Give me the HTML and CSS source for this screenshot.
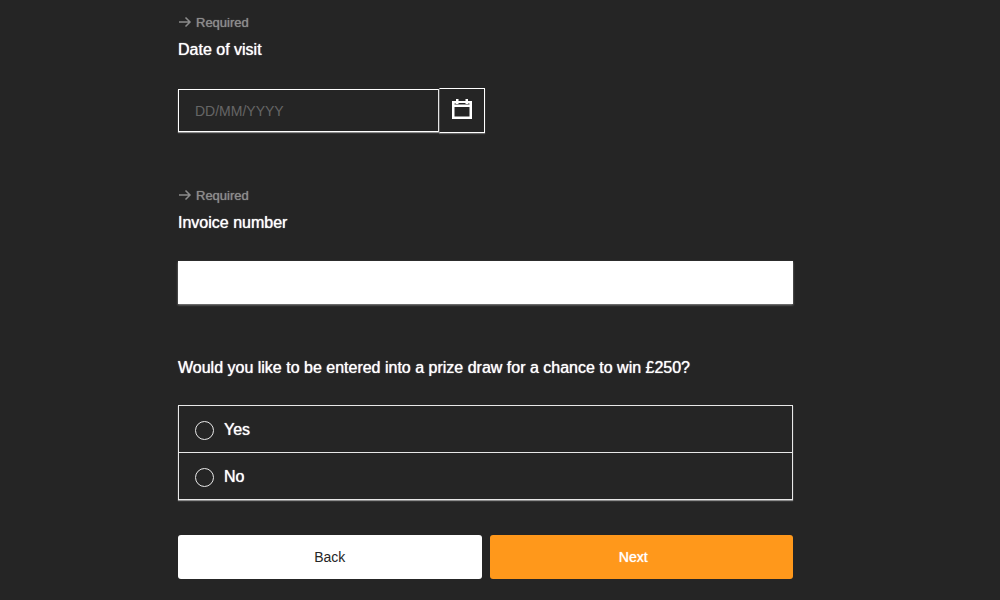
FILE: index.html
```html
<!DOCTYPE html>
<html lang="en">
<head>
<meta charset="utf-8">
<meta name="viewport" content="width=device-width, initial-scale=1">
<title>Visit details</title>
<link rel="stylesheet" href="styles.css">
</head>
<body>
<main class="page">
<form class="survey">
  <div class="field">
    <div class="required"><svg class="arrow" viewBox="0 0 14 14" aria-hidden="true"><path d="M1 6H12M7.5 1.5L12 6L7.5 10.5"/></svg>Required</div>
    <label class="title" for="visit">Date of visit</label>
    <div class="date-group">
      <input class="text-box date-box" id="visit" type="text" placeholder="DD/MM/YYYY" required>
      <button class="calendar-button" type="button" aria-label="Choose a date">
        <svg class="calendar" viewBox="0 0 20 20" aria-hidden="true"><path fill-rule="evenodd" d="M4 0H6.5V2H13.5V0H16V2H20V20H0V2H4ZM2.5 8V17.5H17.5V8ZM2.5 4.5V5.5H17.5V4.5H16V5H13.5V4H6.5V5H4V4.5Z"/></svg>
      </button>
    </div>
  </div>
  <div class="field">
    <div class="required"><svg class="arrow" viewBox="0 0 14 14" aria-hidden="true"><path d="M1 6H12M7.5 1.5L12 6L7.5 10.5"/></svg>Required</div>
    <label class="title" for="invoice">Invoice number</label>
    <input class="text-box invoice-box" id="invoice" type="text" required>
  </div>
  <div class="field choice" role="radiogroup" aria-labelledby="draw-title">
    <div class="title" id="draw-title">Would you like to be entered into a prize draw for a chance to win £250?</div>
    <div class="options">
      <label class="option"><input class="radio" type="radio" name="draw" value="yes">Yes</label>
      <label class="option"><input class="radio" type="radio" name="draw" value="no">No</label>
    </div>
  </div>
  <div class="actions">
    <button class="button back" type="button">Back</button>
    <button class="button next" type="submit">Next</button>
  </div>
</form>
</main>
</body>
</html>
```
FILE: styles.css
```css
* { box-sizing: border-box; }
body {
  margin: 0;
  background: #252525;
  color: #fff;
  font: 16px/24px "Liberation Sans", Arial, sans-serif;
}
.page { padding: 13px 45px 21px 16px; }
.survey { max-width: 615px; margin: 0 auto; }
.field { margin-bottom: 52px; }
.required {
  display: flex;
  align-items: center;
  gap: 4px;
  margin-bottom: 5px;
  color: #8c8c8c;
  font-size: 13px;
  line-height: 20px;
  text-shadow: 0 0 1px #8c8c8c;
}
.arrow {
  width: 14px;
  height: 14px;
  fill: none;
  stroke: #8c8c8c;
  stroke-width: 1.5;
}
.title {
  display: block;
  margin-bottom: 26px;
  text-shadow: 0 0 1px #fff;
}
.text-box {
  display: block;
  width: 100%;
  height: 43px;
  padding: 0 16px;
  border: 1px solid #fff;
  border-radius: 0;
  background: #fff;
  box-shadow: 0 1px 2px #8c8c8c;
  color: #252525;
  font: inherit;
}
.date-group {
  display: flex;
  align-items: center;
  max-width: 307px;
  padding-bottom: 1px;
}
.date-box {
  flex: 1;
  min-width: 0;
  background: transparent;
  box-shadow: 0 1px 1px #8c8c8c;
  color: #fff;
  font-size: 14px;
}
.date-box::placeholder { color: #666; opacity: 1; }
.calendar-button {
  display: flex;
  justify-content: center;
  width: 46px;
  height: 45px;
  padding: 10px 0;
  border: 1px solid #fff;
  border-left-color: #555;
  background: transparent;
  box-shadow: 0 1px 1px #666;
}
.calendar { width: 20px; height: 20px; fill: #fff; }
.options {
  border: 1px solid #e8e8e8;
  box-shadow: 0 1px 1px #8c8c8c;
}
.option {
  display: flex;
  align-items: center;
  gap: 10px;
  height: 46px;
  padding: 2px 16px 0;
  text-shadow: 0 0 1px #fff;
}
.option + .option { height: 47px; border-top: 1px solid #e8e8e8; }
.radio {
  appearance: none;
  width: 19px;
  height: 19px;
  margin: 0;
  border: 1px solid #e8e8e8;
  border-radius: 50%;
}
.radio:checked { background: #ff981b; box-shadow: inset 0 0 0 4px #252525; }
.choice { margin-bottom: 35px; }
.choice .title { margin-bottom: 25px; }
.actions {
  display: grid;
  grid-template-columns: 1fr 1fr;
  gap: 8px;
}
.button {
  height: 44px;
  padding: 0;
  border: 0;
  border-radius: 3px;
  font: 14px/20px "Liberation Sans", Arial, sans-serif;
}
.back { background: #fff; color: #252525; }
.next { padding-right: 16px; background: #ff981b; color: #fff; text-shadow: 0 0 1px #fff; }
```
